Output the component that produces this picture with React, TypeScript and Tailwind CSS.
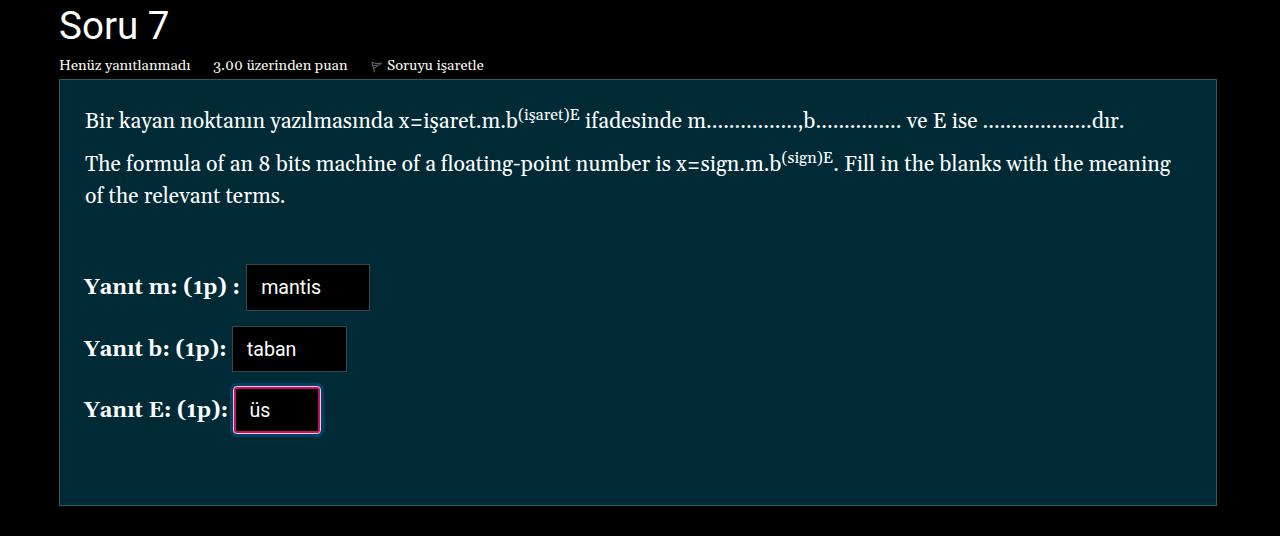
import type { ReactNode } from "react";

const serif = "font-[Gelasio,Georgia,'Liberation_Serif',serif]";
const sans = "font-[Roboto,'Liberation_Sans',sans-serif]";

function Sup({ children }: { children: ReactNode }) {
  return <sup className="relative top-[-0.5em] align-baseline text-[16px] leading-[0]">{children}</sup>;
}

function Flag() {
  return (
    <svg viewBox="0 0 12 12" className="mt-[3px] h-3 w-3 shrink-0" fill="none" stroke="#6f6f6f" strokeWidth="1">
      <path d="M1 1.5 L3.6 11.5 M1 1.5 Q5 3 10.5 2.3 L3 7.2 M2.2 4.6 L6.5 4" />
    </svg>
  );
}

function Label({ children }: { children: string }) {
  return <span className="mt-px -ml-px text-[21.33px] leading-8 font-bold whitespace-pre">{children}</span>;
}

function Answer({ label, value, width, height }: { label: string; value: string; width: string; height: string }) {
  return (
    <label className="flex h-[46px] items-start gap-[5px]">
      <span className="flex h-[46px] items-center">
        <Label>{label}</Label>
      </span>
      <input
        type="text"
        defaultValue={value}
        className={`${sans} border border-[#37474d] bg-black px-[14px] text-[19.6px] text-white outline-none ${width} ${height}`}
      />
    </label>
  );
}

export default function App() {
  return (
    <main className={`${serif} h-[536px] w-full overflow-hidden bg-black pl-[59px] text-white`}>
      <h3 className={`${sans} h-[54px] pt-[2px] text-[38.6px] leading-[48px] font-normal`}>Soru 7</h3>
      <div className="mb-[2px] flex h-[23px] items-center text-[14.6px] leading-5 text-[#f7f7f0]">
        <span className="w-[154px] whitespace-nowrap">Henüz yanıtlanmadı</span>
        <span className="w-[158px] whitespace-nowrap">3.00 üzerinden puan</span>
        <span className="flex items-center gap-1 whitespace-nowrap">
          <Flag />
          Soruyu işaretle
        </span>
      </div>
      <section className="h-[427px] w-[1158px] border border-[#256069] bg-[#002b36] px-[25px] pt-[26px]">
        <p className="mb-[11px] text-[21.3px] leading-8 whitespace-nowrap">
          Bir kayan noktanın yazılmasında x=işaret.m.b<Sup>(işaret)E</Sup> ifadesinde m................,b............... ve E ise ...................dır.
        </p>
        <p className="text-[21.3px] leading-8 whitespace-nowrap">
          The formula of an 8 bits machine of a floating-point number is x=sign.m.b<Sup>(sign)E</Sup>. Fill in the blanks with the meaning
          <br />
          of the relevant terms.
        </p>
        <div className="mt-[51px] flex flex-col items-start gap-4">
          <Answer label="Yanıt m: (1p) :" value="mantis" width="ml-px w-[124px]" height="h-[47px]" />
          <Answer label="Yanıt b: (1p):" value="taban" width="w-[115px]" height="h-[46px]" />
          <label className="-mt-px flex h-[46px] items-center gap-[5px]">
            <Label>Yanıt E: (1p):</Label>
            <input
              type="text"
              defaultValue="üs"
              className={`${sans} h-[48px] w-[88px] rounded-[4px] border-[1.5px] border-[#f8c6e0] bg-black px-[15px] text-[19.6px] text-white shadow-[0_0_0_1px_#8fa3bf,inset_0_0_0_2px_#c4125c] outline-3 outline-[#004266]`}
            />
          </label>
        </div>
      </section>
    </main>
  );
}
